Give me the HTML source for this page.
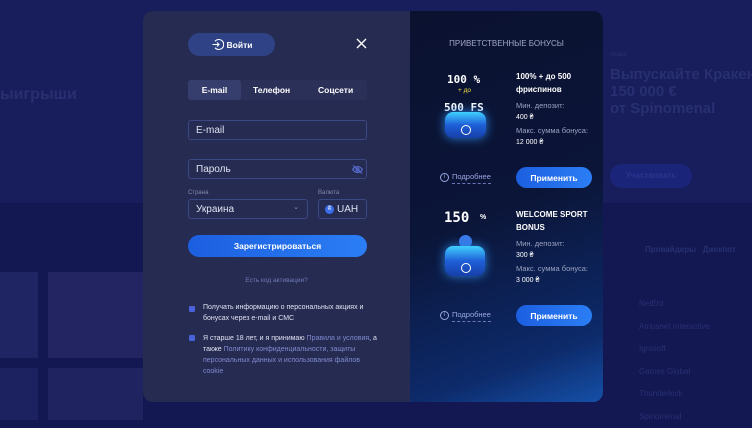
<!DOCTYPE html>
<html><head><meta charset="utf-8"><style>
*{margin:0;padding:0;box-sizing:border-box}
body{width:752px;height:420px;overflow:hidden;position:relative;font-family:"Liberation Sans","Noto Sans CJK SC",sans-serif;background:#131852;color:#fff}
.bg1{position:absolute;left:0;top:0;width:752px;height:203px;background:#181e5c}
.bgt{position:absolute;color:#283072;font-weight:bold;white-space:nowrap}
.abs{position:absolute}
.modal{position:absolute;left:143px;top:11px;width:460px;height:391px;border-radius:10px;overflow:hidden}
.left{position:absolute;left:0;top:0;width:267px;height:391px;background:#262b51}
.right{position:absolute;left:267px;top:0;width:193px;height:391px;background:linear-gradient(160deg,#0b1230 0%,#0b1538 50%,#0d2a6a 85%,#1550a8 100%)}
.inp{position:absolute;border:1px solid #3b4884;border-radius:3px;font-size:10px;color:#dfe3f3;padding-left:7px;display:flex;align-items:center}
.lbl{position:absolute;font-size:6px;color:#8088b0}
.btn{position:absolute;border-radius:11px;background:linear-gradient(90deg,#1c5fe0,#2b7ef5);font-weight:bold;font-size:8.5px;display:flex;align-items:center;justify-content:center}
.t7{font-size:7px;line-height:11px;color:#dfe2f2;position:absolute}
.lnk{color:#7f8ad0}
.cb{position:absolute;width:6px;height:6px;background:#4a62d8;border-radius:1px}
.rt{position:absolute;font-size:7.5px;line-height:12.5px}
.g{color:#9aa2c0}
.more{position:absolute;font-size:7.5px;color:#9aa6e0;border-bottom:1px dashed #6a76b8;padding-bottom:2px}
.ic{position:absolute;width:9px;height:9px;border:1px solid #9aa6e0;border-radius:50%;font-size:6px;color:#9aa6e0;text-align:center;line-height:7px}
.px{position:absolute;font-family:"DejaVu Sans Mono",monospace;font-weight:bold;color:#fff}
</style></head><body>
<div class="bg1"></div>
<div class="bgt" style="left:0;top:86px;font-size:16px">ыигрыши</div>
<div class="bgt" style="left:610px;top:52px;font-size:6px;font-weight:normal">Акция</div>
<div class="bgt" style="left:610px;top:66px;font-size:15px;line-height:17px">Выпускайте Кракен<br>150 000 €<br>от Spinomenal</div>
<div class="abs" style="left:610px;top:164px;width:82px;height:24px;border-radius:12px;background:#1a2478;color:#2a3690;font-size:8px;font-weight:bold;line-height:24px;text-align:center">Участвовать</div>
<div class="bgt" style="left:645px;top:245px;font-size:8px">Провайдеры &nbsp; Джекпот</div>
<div class="bgt" style="left:639px;top:293px;font-size:8px;font-weight:normal;line-height:22.5px">NetEnt<br>Amusnet Interactive<br>Igrosoft<br>Games Global<br>Thunderkick<br>Spinomenal</div>
<div class="abs" style="left:0;top:272px;width:38px;height:86px;background:#1f2462"></div>
<div class="abs" style="left:48px;top:272px;width:95px;height:86px;background:#232562"></div>
<div class="abs" style="left:0;top:368px;width:38px;height:52px;background:#1c2260"></div>
<div class="abs" style="left:48px;top:368px;width:95px;height:52px;background:#1f2461"></div>

<div class="modal">
<div class="left">
 <div class="abs" style="left:45px;top:22px;width:87px;height:23px;border-radius:12px;background:#2e4285;font-size:8.5px;font-weight:bold;display:flex;align-items:center;justify-content:center;gap:3px">
  <svg width="13" height="13" viewBox="0 0 13 13" fill="none" stroke="#fff" stroke-width="1.1"><path d="M4 3.2A5 5 0 1 1 4 9.8"/><path d="M1.5 6.5H8M6 4.5l2 2-2 2"/></svg>Войти</div>
 <svg class="abs" style="left:213px;top:27px" width="11" height="11" stroke="#fff" stroke-width="1.4"><path d="M1 1l9 9M10 1l-9 9"/></svg>
 <div class="abs" style="left:45px;top:69px;width:179px;height:20px;border-radius:3px;background:#2a3058"></div>
 <div class="abs" style="left:45px;top:69px;width:53px;height:20px;border-radius:3px;background:#353e6c;font-size:8.5px;font-weight:bold;text-align:center;line-height:20px">E-mail</div>
 <div class="abs" style="left:110px;top:69px;font-size:8.5px;font-weight:bold;line-height:20px">Телефон</div>
 <div class="abs" style="left:175px;top:69px;font-size:8.5px;font-weight:bold;line-height:20px">Соцсети</div>
 <div class="inp" style="left:45px;top:109px;width:179px;height:20px">E-mail</div>
 <div class="inp" style="left:45px;top:148px;width:179px;height:20px">Пароль
  <svg class="abs" style="left:163px;top:5px" width="11" height="9" fill="none" stroke="#5b70d8" stroke-width="1"><path d="M0.5 4.5Q5.5 -1.5 10.5 4.5Q5.5 10.5 0.5 4.5Z"/><circle cx="5.5" cy="4.5" r="1.6"/><path d="M1 0.5l9 8"/></svg></div>
 <div class="lbl" style="left:45px;top:179px">Страна</div>
 <div class="lbl" style="left:175px;top:179px">Валюта</div>
 <div class="inp" style="left:45px;top:188px;width:120px;height:20px">Украина<span style="position:absolute;right:8px;top:3px;font-size:7px;color:#8a94c8">⌄</span></div>
 <div class="inp" style="left:175px;top:188px;width:49px;height:20px;padding-left:6px"><span style="width:9px;height:9px;border-radius:50%;background:#3a6ee8;display:inline-block;margin-right:3px;font-size:6px;text-align:center;line-height:9px">₴</span>UAH</div>
 <div class="btn" style="left:45px;top:224px;width:179px;height:22px">Зарегистрироваться</div>
 <div class="abs" style="left:0;width:267px;top:266px;text-align:center;font-size:6.5px;color:#6f7bb8">Есть код активации?</div>
 <div class="cb" style="left:46px;top:295px"></div>
 <div class="t7" style="left:60px;top:291px">Получать информацию о персональных акциях и<br>бонусах через e-mail и СМС</div>
 <div class="cb" style="left:46px;top:324px"></div>
 <div class="t7" style="left:60px;top:322px">Я старше 18 лет, и я принимаю <span class="lnk">Правила и условия</span>, а<br>также <span class="lnk">Политику конфиденциальности, защиты<br>персональных данных и использования файлов<br>cookie</span></div>
</div>
<div class="right">
 <div class="abs" style="left:0;width:193px;top:28px;text-align:center;font-size:8px;color:#a2a9c6">ПРИВЕТСТВЕННЫЕ БОНУСЫ</div>
 <div class="px" style="left:37px;top:62px;font-size:11px">100 %</div>
 <div class="abs" style="left:48px;top:76px;font-size:6.5px;color:#f3e04a">+ до</div>
 <div class="px" style="left:34px;top:90px;font-size:11px">500 FS</div>
 <div class="abs" style="left:35px;top:101px;width:41px;height:26px;border-radius:8px;background:linear-gradient(180deg,#3fd0ff,#1f5fd8 50%,#163fa8);box-shadow:0 0 10px #2a80e0"></div>
 <div class="abs" style="left:51px;top:114px;width:10px;height:10px;border-radius:50%;border:1.5px solid #fff"></div>
 <div class="rt" style="left:106px;top:60px;font-weight:bold;font-size:8px">100% + до 500<br>фриспинов</div>
 <div class="rt g" style="left:106px;top:89px">Мин. депозит:</div>
 <div class="rt" style="left:106px;top:101px;font-size:7px">400 ₴</div>
 <div class="rt g" style="left:106px;top:114px">Макс. сумма бонуса:</div>
 <div class="rt" style="left:106px;top:126px;font-size:7px">12 000 ₴</div>
 <div class="ic" style="left:30px;top:162px">i</div>
 <div class="more" style="left:42px;top:161px">Подробнее</div>
 <div class="btn" style="left:106px;top:156px;width:76px;height:21px">Применить</div>

 <div class="px" style="left:34px;top:199px;font-size:14px">150</div>
 <div class="abs" style="left:70px;top:203px;font-size:7px;font-weight:bold">%</div>
 <div class="abs" style="left:49px;top:224px;width:13px;height:13px;border-radius:50%;background:#3a7ae8"></div>
 <div class="abs" style="left:35px;top:235px;width:40px;height:30px;border-radius:8px;background:linear-gradient(180deg,#3fd0ff,#1f5fd8 50%,#163fa8);box-shadow:0 0 10px #2a80e0"></div>
 <div class="abs" style="left:51px;top:252px;width:10px;height:10px;border-radius:50%;border:1.5px solid #fff"></div>
 <div class="rt" style="left:106px;top:198px;font-weight:bold;font-size:8px">WELCOME SPORT<br>BONUS</div>
 <div class="rt g" style="left:106px;top:227px">Мин. депозит:</div>
 <div class="rt" style="left:106px;top:239px;font-size:7px">300 ₴</div>
 <div class="rt g" style="left:106px;top:252px">Макс. сумма бонуса:</div>
 <div class="rt" style="left:106px;top:264px;font-size:7px">3 000 ₴</div>
 <div class="ic" style="left:30px;top:300px">i</div>
 <div class="more" style="left:42px;top:299px">Подробнее</div>
 <div class="btn" style="left:106px;top:294px;width:76px;height:21px">Применить</div>
</div>
</div>
</body></html>
